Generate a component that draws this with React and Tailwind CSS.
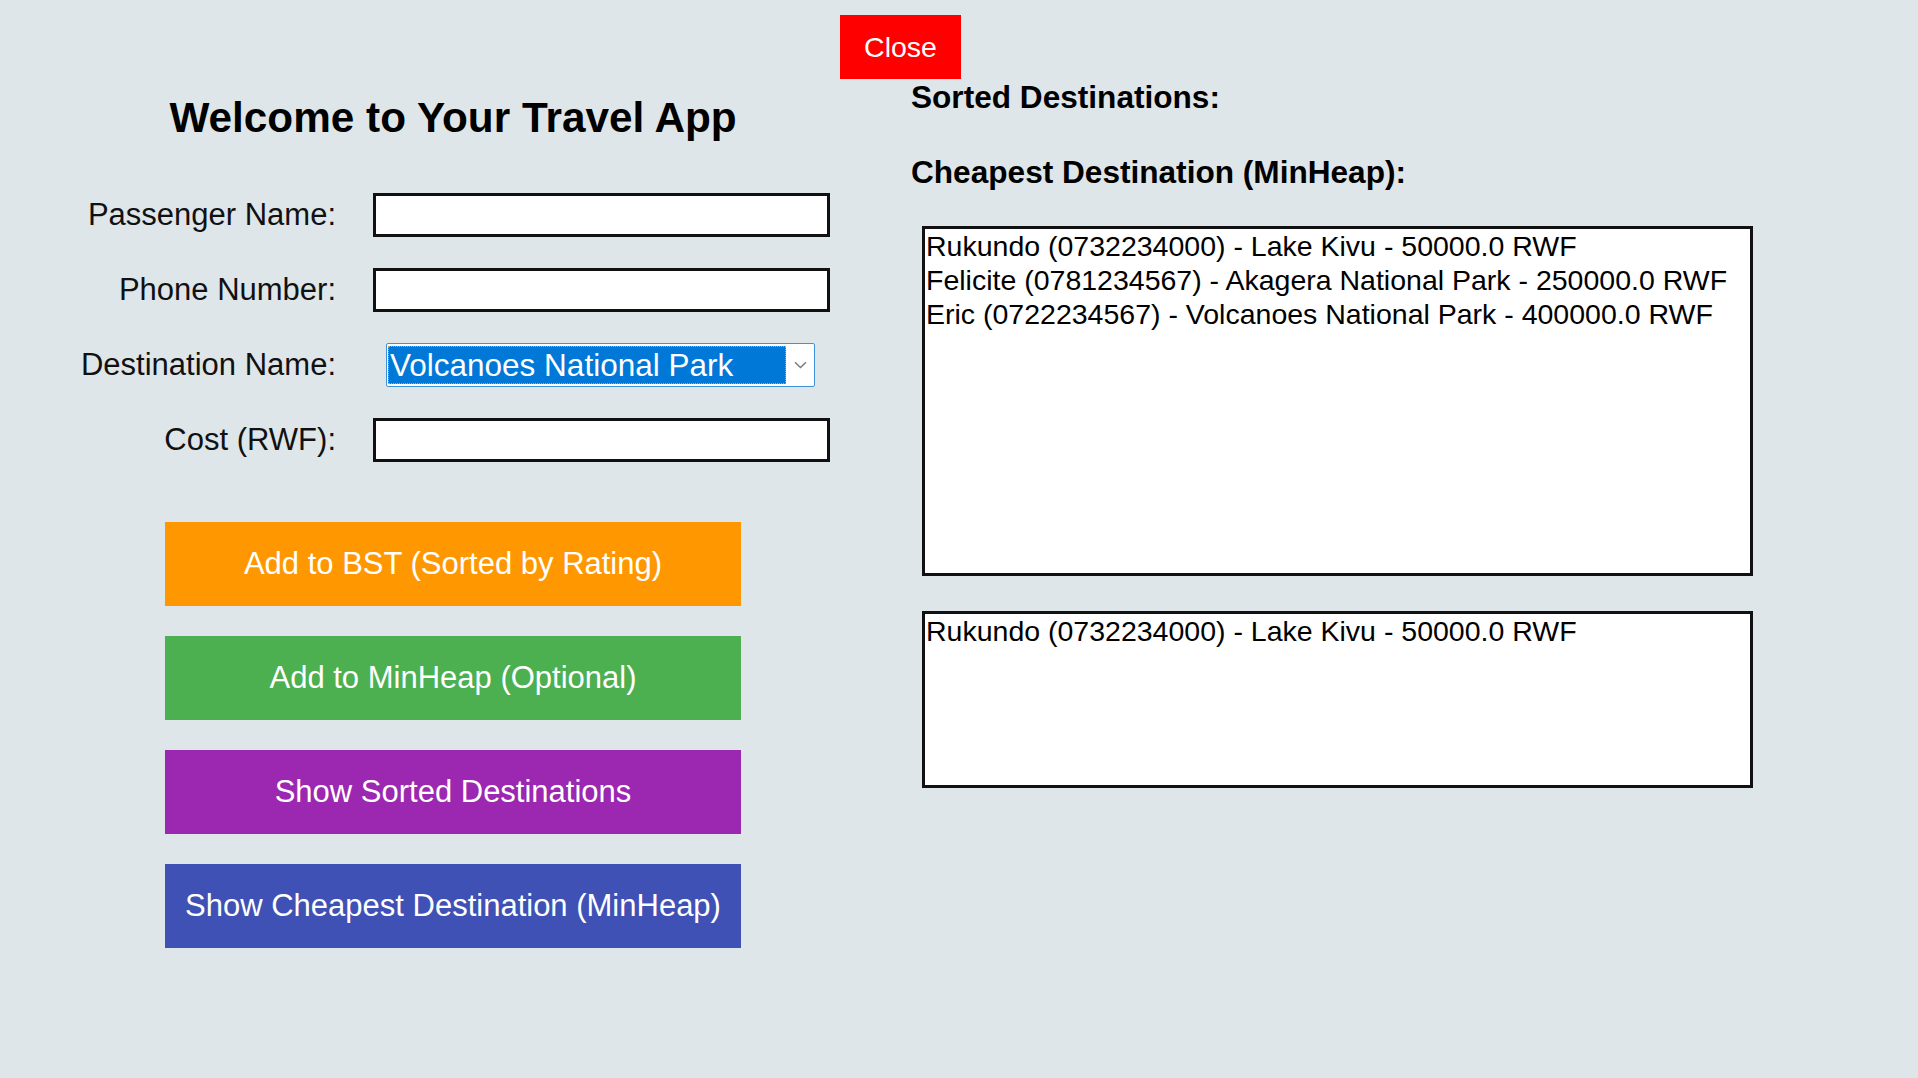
import React from "react";

const font = { fontFamily: "'Liberation Sans', Arial, Helvetica, sans-serif" };

function Field({ label, children }) {
  return (
    <div className="flex items-center h-[75px]">
      <div className="w-[336px] text-right text-[31px] leading-[36px] text-[#111]">{label}</div>
      <div className="ml-[37px] flex items-center">{children}</div>
    </div>
  );
}

function TextInput() {
  return <div className="w-[457px] h-[44px] bg-white border-[3px] border-[#111]" />;
}

function Select() {
  return (
    <div className="ml-[13px] w-[429px] h-[44px] bg-white border border-[#3d92dc] rounded-[2px] flex pl-[1px] py-[2px]">
      <div className="flex-1 bg-[#0078d7] outline outline-1 outline-dotted outline-[#d9a35a] -outline-offset-1 flex items-center pl-[2px] text-white text-[31.5px] leading-[36px] whitespace-nowrap">
        Volcanoes National Park
      </div>
      <div className="w-[28px] flex items-center justify-center">
        <svg width="13" height="8" viewBox="0 0 13 8" fill="none">
          <path d="M1 1.2 L6.5 6.5 L12 1.2" stroke="#7a7a7a" strokeWidth="1.4" />
        </svg>
      </div>
    </div>
  );
}

function Btn({ color, children }) {
  return (
    <div className={`w-[576px] h-[84px] flex items-center justify-center text-white text-[31px] leading-[36px] whitespace-nowrap ${color}`}>
      {children}
    </div>
  );
}

export default function App() {
  const sorted = [
    "Rukundo (0732234000) - Lake Kivu - 50000.0 RWF",
    "Felicite (0781234567) - Akagera National Park - 250000.0 RWF",
    "Eric (0722234567) - Volcanoes National Park - 400000.0 RWF",
  ];
  return (
    <div style={font} className="w-[1918px] h-[1078px] bg-[#dfe6e9] flex overflow-hidden">
      {/* Left column */}
      <div className="w-[840px] flex flex-col pt-[93px]">
        <div className="ml-[165px] w-[576px] text-center font-bold text-[42.3px] leading-[49px] text-black whitespace-nowrap">
          Welcome to Your Travel App
        </div>
        <div className="mt-[35px] flex flex-col">
          <Field label="Passenger Name:"><TextInput /></Field>
          <Field label="Phone Number:"><TextInput /></Field>
          <Field label="Destination Name:"><Select /></Field>
          <Field label="Cost (RWF):"><TextInput /></Field>
        </div>
        <div className="ml-[165px] mt-[45px] flex flex-col gap-[30px]">
          <Btn color="bg-[#ff9800]">Add to BST (Sorted by Rating)</Btn>
          <Btn color="bg-[#4caf50]">Add to MinHeap (Optional)</Btn>
          <Btn color="bg-[#9c27b0]">Show Sorted Destinations</Btn>
          <Btn color="bg-[#3f51b5]">Show Cheapest Destination (MinHeap)</Btn>
        </div>
      </div>

      {/* Right column */}
      <div className="flex flex-col pt-[15px]">
        <div className="w-[121px] h-[64px] bg-[#ff0000] text-white text-[28.5px] leading-[34px] flex items-center justify-center">
          Close
        </div>
        <div className="ml-[71px] font-bold text-[31.6px] leading-[36px] text-black whitespace-nowrap">
          Sorted Destinations:
        </div>
        <div className="ml-[71px] mt-[39px] font-bold text-[31.6px] leading-[36px] text-black whitespace-nowrap">
          Cheapest Destination (MinHeap):
        </div>
        <div className="ml-[82px] mt-[36px] w-[831px] h-[350px] bg-white border-[3px] border-[#111] pl-[1px] text-[28.5px] leading-[34px] text-black">
          {sorted.map((s) => (
            <div key={s} className="whitespace-nowrap">{s}</div>
          ))}
        </div>
        <div className="ml-[82px] mt-[35px] w-[831px] h-[177px] bg-white border-[3px] border-[#111] pl-[1px] text-[28.5px] leading-[34px] text-black">
          <div className="whitespace-nowrap">{sorted[0]}</div>
        </div>
      </div>
    </div>
  );
}
